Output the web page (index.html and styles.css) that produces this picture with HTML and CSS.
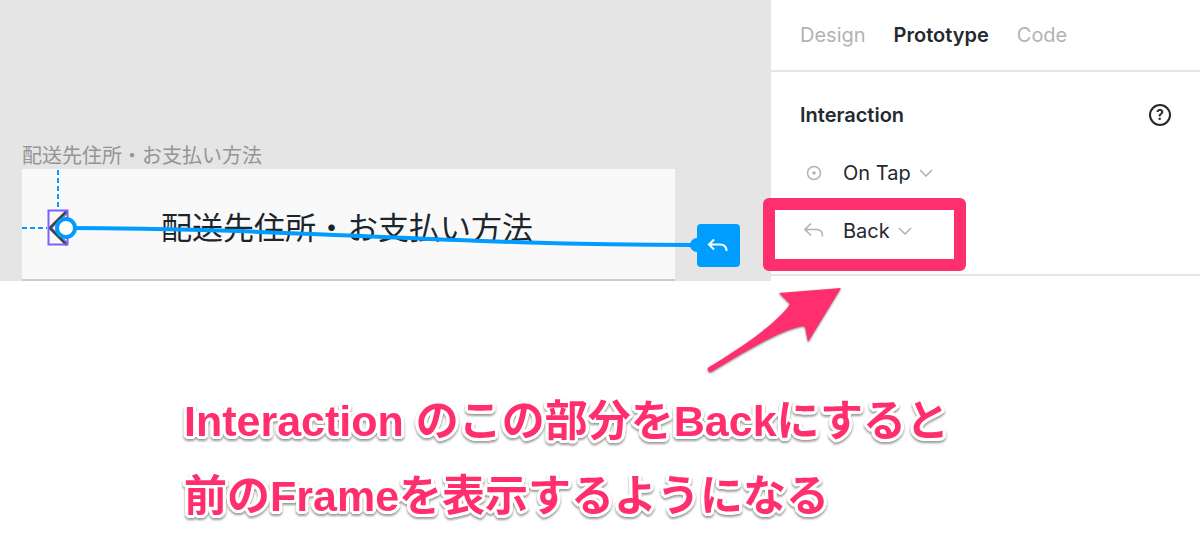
FILE: index.html
```
<!DOCTYPE html>
<html lang="ja">
<head>
    <meta charset="UTF-8">
    <meta name="viewport" content="width=device-width, initial-scale=1.0">
    <title>Prototype - Back</title>
    <link rel="stylesheet" href="styles.css">
</head>
<body>
    <main class="editor">
        <section class="canvas">
            <div class="frame-label">配送先住所・お支払い方法</div>
            <div class="frame">
                <h1>配送先住所・お支払い方法</h1>
            </div>
            <!-- selection, guides and the connection to the Back node -->
            <svg class="connection" width="771" height="281" viewBox="0 0 771 281" fill="none">
                <path d="M58 170V208M22 228H47" stroke="#009dff" stroke-width="2" stroke-dasharray="5 3"/>
                <path d="M67 211L50 228L67 245" stroke="#444" stroke-width="3"/>
                <path d="M67 214L52 228L67 242" stroke="#7b61ff" stroke-width="1"/>
                <rect x="48.5" y="210.5" width="19" height="34" stroke="#7b61ff" stroke-width="2"/>
                <path d="M66 228C290 228 450 245 693 245" stroke="#009dff" stroke-width="4"/>
                <circle cx="66" cy="228" r="9" fill="#fff" stroke="#009dff" stroke-width="4"/>
                <circle cx="697" cy="245" r="7" fill="#009dff"/>
                <rect x="697" y="224" width="43" height="43" rx="4" fill="#009dff"/>
                <path d="M714 239.500L709 244.500L714 249.500M709 244.500H720Q726.500 244.500 726.500 251" stroke="#fff" stroke-width="2"/>
            </svg>
        </section>

        <aside class="panel">
            <nav class="tabs">
                <button type="button">Design</button>
                <button type="button" class="active">Prototype</button>
                <button type="button">Code</button>
            </nav>
            <section class="interaction">
                <div class="row heading">
                    <h2>Interaction</h2>
                    <button type="button" class="help" aria-label="Help">?</button>
                </div>
                <div class="row">
                    <svg class="icon" width="20" height="20" viewBox="0 0 20 20" fill="none" aria-hidden="true">
                        <circle cx="10" cy="10" r="6.5" stroke="#b3b3b3" stroke-width="1.5"/>
                        <circle cx="10" cy="10" r="1.8" fill="#b3b3b3"/>
                    </svg>
                    <select aria-label="Trigger">
                        <option>On Tap</option>
                    </select>
                    <svg class="chevron" width="14" height="8" viewBox="0 0 14 8" fill="none" aria-hidden="true">
                        <path d="M1 1L7 7L13 1" stroke="#b3b3b3" stroke-width="1.6"/>
                    </svg>
                </div>
                <div class="row back">
                    <svg class="icon" width="20" height="20" viewBox="0 0 20 20" fill="none" aria-hidden="true">
                        <path d="M7 2.5L1 8.5L7 14.5M1 8.5H13Q18.5 8.5 18.5 15.5" stroke="#b3b3b3" stroke-width="1.6"/>
                    </svg>
                    <select aria-label="Action">
                        <option>Back</option>
                    </select>
                    <svg class="chevron" width="14" height="8" viewBox="0 0 14 8" fill="none" aria-hidden="true">
                        <path d="M1 1L7 7L13 1" stroke="#b3b3b3" stroke-width="1.6"/>
                    </svg>
                    <div class="highlight"></div>
                    <svg class="arrow" width="140" height="90" viewBox="0 0 140 90" aria-hidden="true">
                        <path d="M136 3L74 8L85 19C74 36 42 59 4 82A2.6 2.6 0 0 0 7 86.5C46 63 76 45 98 41L100 42L103 57Z" fill="#ff2f6e"/>
                    </svg>
                </div>
            </section>
        </aside>
    </main>

    <p class="caption">Interaction のこの部分をBackにすると<br>前のFrameを表示するようになる</p>
</body>
</html>
```

FILE: styles.css
```
body {
    margin: 0;
    background-color: #fff;
    color: #24292f;
    font-family: Inter, "Noto Sans CJK JP", sans-serif;
}
h1, h2, p {
    margin: 0;
}
button, select {
    font: inherit;
    color: inherit;
    background: none;
    border: none;
    margin: 0;
    padding: 0;
    cursor: pointer;
}
.editor {
    display: flex;
    align-items: flex-start;
}
.canvas {
    position: relative;
    flex: 1;
    padding: 141px 96px 0 22px;
    background-color: #e5e5e5;
}
.frame-label {
    font-family: "Noto Sans CJK JP", sans-serif;
    font-size: 20px;
    line-height: 28px;
    color: #949494;
    white-space: nowrap;
}
.frame {
    padding: 35px 0 31px 139px;
    background-color: #f9f9f9;
    border-bottom: 2px solid #c8cccc;
}
.frame h1 {
    font-family: "Noto Sans CJK JP", sans-serif;
    font-size: 31px;
    font-weight: 400;
    line-height: 44px;
    color: #1d252c;
    white-space: nowrap;
}
.connection {
    position: absolute;
    top: 0;
    left: 0;
}
.panel {
    width: 429px;
    font-size: 20px;
}
.tabs {
    display: flex;
    gap: 28px;
    height: 70px;
    padding-left: 29px;
    border-bottom: 2px solid #e5e5e5;
}
.tabs button {
    color: #b3b3b3;
}
.tabs .active {
    font-weight: 600;
    color: #24292f;
}
.interaction {
    padding: 14px 29px;
    border-bottom: 2px solid #e5e5e5;
}
.row {
    position: relative;
    display: flex;
    align-items: center;
    height: 58px;
}
.heading {
    justify-content: space-between;
}
.heading h2 {
    font-size: 20px;
    font-weight: 600;
}
.help {
    box-sizing: border-box;
    width: 22px;
    height: 22px;
    border: 2px solid #24292f;
    border-radius: 50%;
    font-size: 14px;
    font-weight: 700;
    line-height: 18px;
}
.icon {
    margin: 0 19px 0 4px;
}
.row select {
    appearance: none;
}
.chevron {
    margin-left: 8px;
}
.highlight {
    position: absolute;
    top: -4px;
    left: -37px;
    box-sizing: border-box;
    width: 203px;
    height: 73px;
    border: 12px solid #ff2f6e;
    border-radius: 6px;
    pointer-events: none;
}
.arrow {
    position: absolute;
    top: 83px;
    left: -95px;
    filter: drop-shadow(0 1px 1px rgba(0, 0, 0, 0.5));
    pointer-events: none;
}
.caption {
    padding: 103px 22px 0 184px;
    font-family: "Liberation Sans", "Noto Sans CJK JP", sans-serif;
    font-size: 43px;
    font-weight: 700;
    line-height: 75px;
    color: #ff2f6e;
    text-shadow:
        3px 0 #fff, -3px 0 #fff, 0 3px #fff, 0 -3px #fff,
        2px 2px #fff, -2px 2px #fff, 2px -2px #fff, -2px -2px #fff,
        3px 1px #fff, -3px 1px #fff, 3px -1px #fff, -3px -1px #fff,
        1px 3px #fff, -1px 3px #fff, 1px -3px #fff, -1px -3px #fff;
    filter: drop-shadow(0 2px 1px rgba(0, 0, 0, 0.4));
}
```
